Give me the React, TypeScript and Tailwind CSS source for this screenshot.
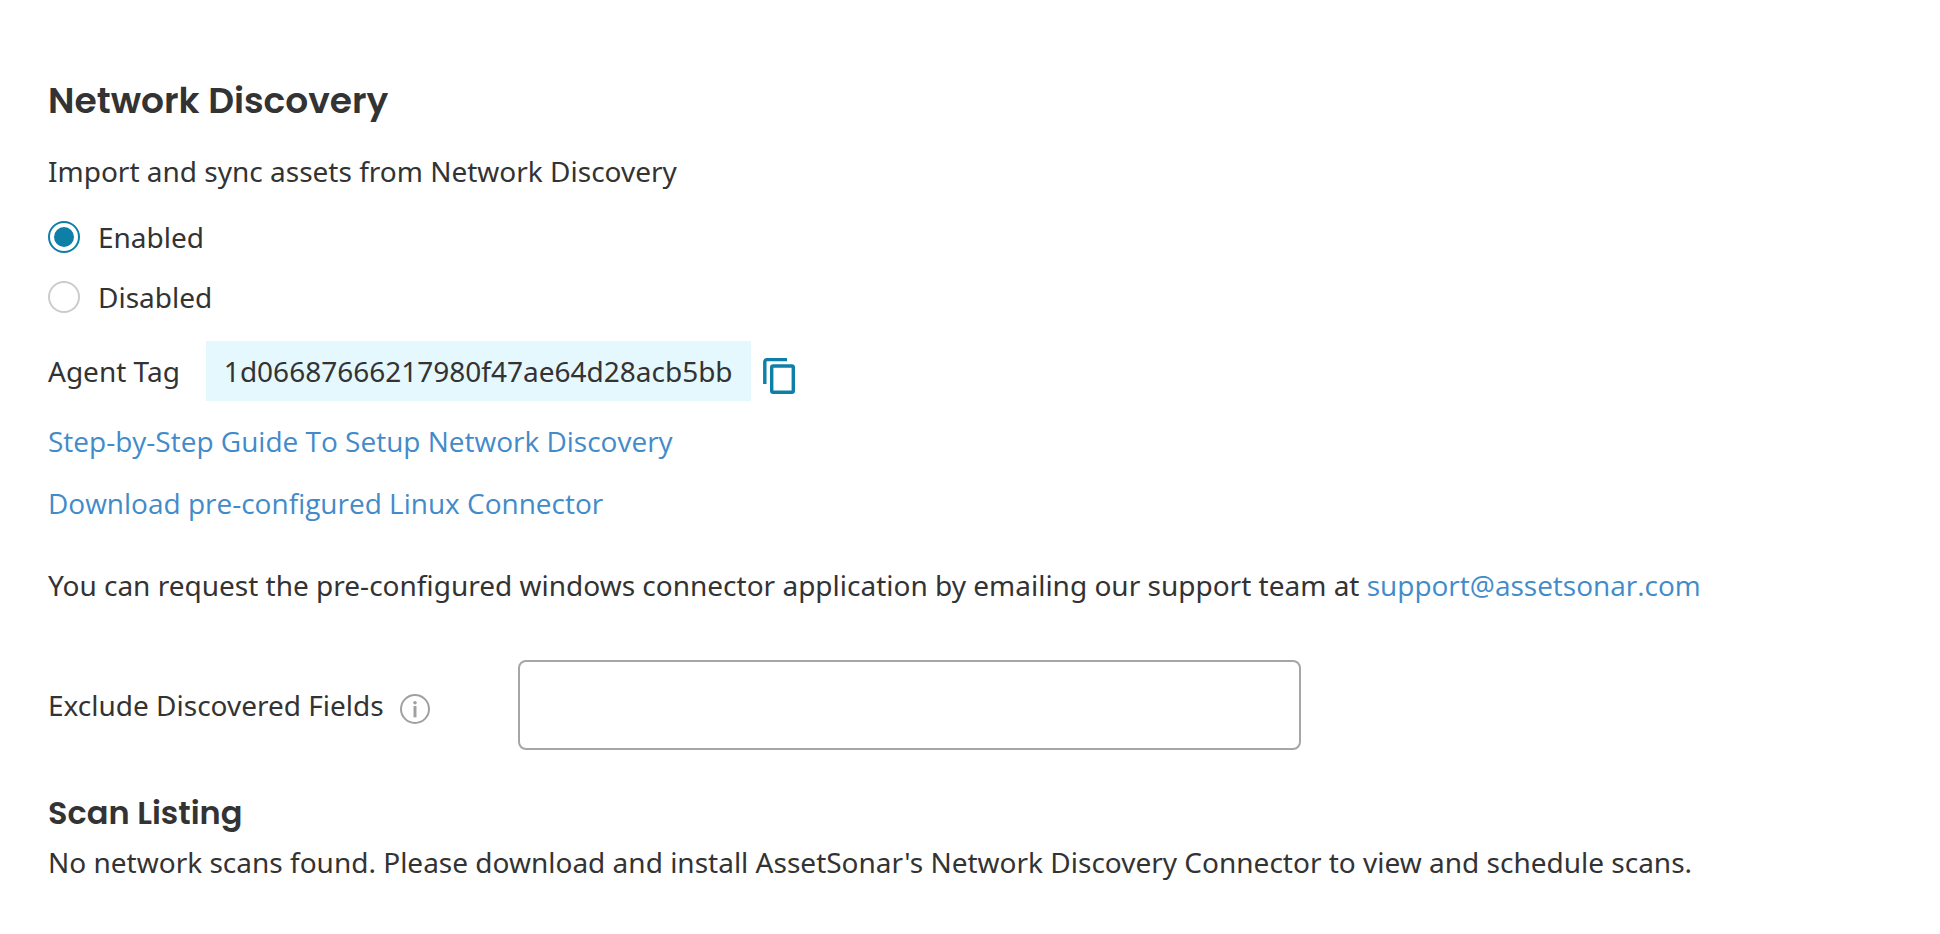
import React, { useState } from 'react';

const AGENT_TAG = '1d06687666217980f47ae64d28acb5bb';

const options = [
  { value: 'enabled', label: 'Enabled' },
  { value: 'disabled', label: 'Disabled' },
];

function CopyIcon() {
  return (
    <svg width="32" height="36" viewBox="0 0 32 36" fill="none" stroke="#0e7fa6" aria-hidden="true">
      <path d="M1.8 26V4a2.2 2.2 0 0 1 2.2-2.4h20" strokeWidth="3.4" />
      <rect x="8.7" y="8" width="21.6" height="26.3" rx="1.6" strokeWidth="3.4" />
    </svg>
  );
}

function InfoIcon() {
  return (
    <svg width="30" height="30" viewBox="0 0 30 30" fill="none" aria-hidden="true">
      <circle cx="15" cy="15" r="14" stroke="#a0a0a0" strokeWidth="2" />
      <circle cx="15" cy="8.7" r="1.8" fill="#a0a0a0" />
      <path d="M15 12v11.3" stroke="#a0a0a0" strokeWidth="3" />
    </svg>
  );
}

export default function App() {
  const [status, setStatus] = useState('enabled');
  const [excluded, setExcluded] = useState('');

  return (
    <main className="bg-white px-12 pt-[77px] pb-10 font-['Noto_Sans','Open_Sans',sans-serif] text-[28px] leading-10 text-[#333333]">
      <h1 className="font-['Poppins','Inter',sans-serif] text-4xl leading-[48px] font-semibold">Network Discovery</h1>
      <p className="mt-[26px]">Import and sync assets from Network Discovery</p>

      {/* Status */}
      <div role="radiogroup" aria-label="Network Discovery" className="mt-[26px] flex flex-col items-start gap-5">
        {options.map((option) => (
          <label key={option.value} className="flex items-center gap-[18px] cursor-pointer">
            <input
              type="radio"
              name="status"
              value={option.value}
              checked={status === option.value}
              onChange={() => setStatus(option.value)}
              className="size-8 shrink-0 appearance-none rounded-full border-2 border-[#cccccc] bg-white bg-clip-content p-1 checked:border-[#0e7fa6] checked:bg-[#0e7fa6]"
            />
            {option.label}
          </label>
        ))}
      </div>

      {/* Agent tag */}
      <div className="mt-6 flex items-center">
        <span className="mr-[26px]">Agent Tag</span>
        <span className="bg-[#e5f8fd] px-[18px] py-2.5">{AGENT_TAG}</span>
        <button
          type="button"
          aria-label="Copy agent tag"
          onClick={() => navigator.clipboard?.writeText(AGENT_TAG)}
          className="ml-3 pt-2.5 cursor-pointer"
        >
          <CopyIcon />
        </button>
      </div>

      {/* Links */}
      <div className="mt-5 flex flex-col items-start gap-[22px] font-['Open_Sans',sans-serif] text-[#428bca]">
        <a href="#guide" className="hover:underline">Step-by-Step Guide To Setup Network Discovery</a>
        <a href="#linux-connector" className="hover:underline">Download pre-configured Linux Connector</a>
      </div>
      <p className="mt-[42px]">
        You can request the pre-configured windows connector application by emailing our support team at{' '}
        <a href="mailto:support@assetsonar.com" className="font-['Open_Sans',sans-serif] text-[#428bca] hover:underline">
          support@assetsonar.com
        </a>
      </p>

      {/* Excluded fields */}
      <div className="mt-[55px] flex items-center">
        <div className="flex w-[470px] shrink-0 items-center gap-4">
          <label htmlFor="excluded-fields">Exclude Discovered Fields</label>
          <button type="button" aria-label="About excluded fields" className="pt-2">
            <InfoIcon />
          </button>
        </div>
        <input
          id="excluded-fields"
          type="text"
          value={excluded}
          onChange={(e) => setExcluded(e.target.value)}
          className="h-[90px] w-full max-w-[783px] rounded-lg border-2 border-[#a6a6a6] px-5 focus:border-[#0e7fa6] focus:outline-none"
        />
      </div>

      {/* Scans */}
      <h2 className="mt-[41px] font-['Poppins','Inter',sans-serif] text-[32px] leading-[44px] font-semibold">Scan Listing</h2>
      <p className="mt-[7px]">
        No network scans found. Please download and install AssetSonar's Network Discovery Connector to view and schedule scans.
      </p>
    </main>
  );
}
